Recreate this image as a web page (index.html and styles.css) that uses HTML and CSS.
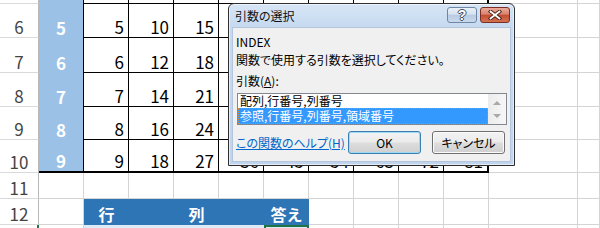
FILE: index.html
```html
<!DOCTYPE html>
<html lang="ja">
<head>
<meta charset="utf-8">
<title>引数の選択</title>
<link rel="stylesheet" href="styles.css">
</head>
<body>
<div class="sheet">
  <!-- row 5 (partially visible) -->
  <div class="rh"></div><div class="a"></div>
  <div class="d"></div><div class="d"></div><div class="d"></div><div class="d"></div><div class="d"></div><div class="d"></div><div class="d"></div><div class="d"></div><div class="d br"></div>
  <div class="g"></div><div class="g"></div>
  <!-- row 6 -->
  <div class="rh">6</div><div class="a">5</div>
  <div class="d">5</div><div class="d">10</div><div class="d">15</div><div class="d">20</div><div class="d">25</div><div class="d">30</div><div class="d">35</div><div class="d">40</div><div class="d br">45</div>
  <div class="g"></div><div class="g"></div>
  <!-- row 7 -->
  <div class="rh">7</div><div class="a">6</div>
  <div class="d">6</div><div class="d">12</div><div class="d">18</div><div class="d">24</div><div class="d">30</div><div class="d">36</div><div class="d">42</div><div class="d">48</div><div class="d br">54</div>
  <div class="g"></div><div class="g"></div>
  <!-- row 8 -->
  <div class="rh">8</div><div class="a">7</div>
  <div class="d">7</div><div class="d">14</div><div class="d">21</div><div class="d">28</div><div class="d">35</div><div class="d">42</div><div class="d">49</div><div class="d">56</div><div class="d br">63</div>
  <div class="g"></div><div class="g"></div>
  <!-- row 9 -->
  <div class="rh">9</div><div class="a">8</div>
  <div class="d">8</div><div class="d">16</div><div class="d">24</div><div class="d">32</div><div class="d">40</div><div class="d">48</div><div class="d">56</div><div class="d">64</div><div class="d br">72</div>
  <div class="g"></div><div class="g"></div>
  <!-- row 10 -->
  <div class="rh">10</div><div class="a bb">9</div>
  <div class="d bb">9</div><div class="d bb">18</div><div class="d bb">27</div><div class="d bb">36</div><div class="d bb">45</div><div class="d bb">54</div><div class="d bb">63</div><div class="d bb">72</div><div class="d bb br">81</div>
  <div class="g"></div><div class="g"></div>
  <!-- row 11 -->
  <div class="rh">11</div><div class="g"></div>
  <div class="g"></div><div class="g"></div><div class="g"></div><div class="g"></div><div class="g"></div><div class="g"></div><div class="g"></div><div class="g"></div><div class="g"></div>
  <div class="g"></div><div class="g"></div>
  <!-- row 12 -->
  <div class="rh">12</div><div class="g"></div>
  <div class="h">行</div><div class="h"></div><div class="h">列</div><div class="h"></div><div class="h">答え</div>
  <div class="g"></div><div class="g"></div><div class="g"></div><div class="g"></div>
  <div class="g"></div><div class="g"></div>
  <!-- row 13 (partially visible) -->
  <div class="rh cur"></div><div class="g"></div>
  <div class="b"></div><div class="b"></div><div class="b"></div><div class="b"></div><div class="b sel"></div>
  <div class="g"></div><div class="g"></div><div class="g"></div><div class="g"></div>
  <div class="g"></div><div class="g"></div>
</div>

<div class="dlg">
  <div class="dlg-title">
    <span class="caption">引数の選択</span>
    <div class="ctrls">
      <span class="tbtn help-btn">?</span>
      <span class="tbtn close-btn">
        <svg width="14" height="10" viewBox="0 0 14 10">
          <path d="M2.5 1.5 L11.5 8.5 M11.5 1.5 L2.5 8.5" stroke="#4a1c14" stroke-width="3.6" stroke-linecap="square" fill="none"/>
          <path d="M2.5 1.5 L11.5 8.5 M11.5 1.5 L2.5 8.5" stroke="#ffffff" stroke-width="1.8" stroke-linecap="square" fill="none"/>
        </svg>
      </span>
    </div>
  </div>
  <div class="dlg-body">
    <div class="line">INDEX</div>
    <div class="line">関数で使用する引数を選択してください。</div>
    <div class="line label">引数(<u>A</u>):</div>
    <div class="listbox">
      <div class="items">
        <div class="item first">配列,行番号,列番号</div>
        <div class="item selected">参照,行番号,列番号,領域番号</div>
      </div>
      <div class="vscroll">
        <span class="arrow up"></span>
        <span class="arrow down"></span>
      </div>
    </div>
    <div class="footer">
      <a class="help-link">この関数のヘルプ(H)</a>
      <button class="btn ok">OK</button>
      <button class="btn cancel">キャンセル</button>
    </div>
  </div>
</div>
</body>
</html>
```

FILE: styles.css
```css
* { box-sizing: border-box; }
html, body { margin: 0; padding: 0; }
body {
  width: 600px;
  height: 228px;
  overflow: hidden;
  position: relative;
  background: #ffffff;
  font-family: "Noto Sans CJK JP", "Noto Sans", sans-serif;
}

/* ---------- spreadsheet ---------- */
.sheet {
  display: grid;
  grid-template-columns: 39px 45px repeat(9, 45px) 89px 1fr;
  grid-template-rows: 4px 34px 35px 34px 33px 33px 26px 26px 1fr;
  height: 228px;
  font-size: 17px;
  line-height: 17px;
}
.sheet > div {
  display: flex;
  align-items: flex-end;
  padding-bottom: 2px;
  white-space: nowrap;
  min-width: 0;
}
.rh {
  justify-content: center;
  color: #444444;
  background: #ffffff;
  border-right: 1px solid #b8b8b8;
  border-bottom: 1px solid #d9d9d9;
}
.rh.cur { border-right: 2px solid #217346; }
.a {
  justify-content: center;
  background: #9bc2e6;
  color: #ffffff;
  font-weight: bold;
  border-right: 1px solid #000000;
}
.d {
  justify-content: flex-end;
  padding-right: 4px;
  color: #000000;
  border-right: 1px solid #000000;
  border-bottom: 1px solid #000000;
}
.bb { border-bottom: 2px solid #000000; }
.br { border-right: 2px solid #000000; }
.g {
  border-right: 1px solid #d4d4d4;
  border-bottom: 1px solid #d4d4d4;
}
.h {
  justify-content: center;
  background: #2e75b6;
  color: #ffffff;
  font-weight: bold;
  font-size: 16px;
}
.b { background: #ddebf7; }
.b.sel {
  border: 2px solid #217346;
  border-bottom: none;
}

/* ---------- dialog ---------- */
.dlg {
  position: absolute;
  left: 228px;
  top: 3px;
  width: 287px;
  height: 163px;
  border: 1px solid #2f2f2f;
  border-radius: 6px 6px 0 0;
  background: linear-gradient(#d7e6f6, #c6daf0 22px, #c0d5ed);
  box-shadow: inset 0 0 0 1px rgba(255, 255, 255, 0.55);
  padding: 0 3px 3px 3px;
  display: flex;
  flex-direction: column;
  font-family: "Noto Sans CJK JP", sans-serif;
  font-size: 12px;
  font-feature-settings: "palt";
  color: #000000;
}
.dlg-title {
  height: 23px;
  display: flex;
  align-items: flex-start;
}
.caption {
  padding-left: 3px;
  line-height: 23px;
  color: #111111;
}
.ctrls {
  margin-left: auto;
  margin-top: 3px;
  margin-right: 1px;
  display: flex;
  gap: 3px;
}
.tbtn {
  width: 30px;
  height: 16px;
  border-radius: 3px;
  display: flex;
  align-items: center;
  justify-content: center;
}
.help-btn {
  border: 1px solid #6f86a4;
  background: linear-gradient(#eaf0f8, #d6e2f0 45%, #b7cbe3 50%, #c9d9ec);
  font-family: "Liberation Sans", sans-serif;
  font-weight: bold;
  font-size: 14px;
  line-height: 14px;
  color: #ffffff;
  text-shadow: 1px 0 #3d4e66, -1px 0 #3d4e66, 0 1px #3d4e66, 0 -1px #3d4e66;
}
.close-btn {
  border: 1px solid #7a2d20;
  background: linear-gradient(#eaab9c, #d7836e 45%, #c34b31 50%, #d27352);
}
.close-btn svg { display: block; }

.dlg-body {
  flex: 1;
  background: #f0f0f0;
  border: 1px solid #b4c6de;
  padding: 5px 5px 0 3px;
  display: flex;
  flex-direction: column;
}
.line {
  height: 18px;
  line-height: 18px;
  white-space: nowrap;
}
.label { margin-top: 3px; }

.listbox {
  margin-top: 3px;
  margin-left: 1px;
  width: 270px;
  height: 32px;
  border: 1px solid #828790;
  background: #ffffff;
  display: flex;
}
.items { flex: 1; }
.item {
  padding-left: 2px;
  white-space: nowrap;
}
.item.first { height: 14px; line-height: 14px; }
.item.selected {
  height: 16px;
  line-height: 16px;
  background: #3399ff;
  color: #ffffff;
  outline: 1px dotted #e08a2c;
  outline-offset: -1px;
}
.vscroll {
  width: 18px;
  background: linear-gradient(90deg, #ececec, #f6f6f6);
  display: flex;
  flex-direction: column;
  align-items: center;
  justify-content: space-around;
  padding: 2px 0;
}
.arrow {
  width: 0;
  height: 0;
  border-left: 4px solid transparent;
  border-right: 4px solid transparent;
}
.arrow.up { border-bottom: 4px solid #a8a8a8; }
.arrow.down { border-top: 4px solid #a8a8a8; }

.footer {
  margin-top: 6px;
  height: 23px;
  display: flex;
  align-items: center;
}
.help-link {
  color: #0066cc;
  text-decoration: underline;
  white-space: nowrap;
}
.btn {
  width: 73px;
  height: 23px;
  padding: 0;
  border-radius: 3px;
  font-family: "Noto Sans CJK JP", sans-serif;
  font-feature-settings: "palt";
  font-size: 12px;
  color: #000000;
  background: linear-gradient(#f3f3f3, #ebebeb 48%, #dddddd 52%, #cfcfcf);
}
.ok {
  margin-left: auto;
  border: 1px solid #3c7fb1;
  box-shadow: inset 0 0 0 1px #9fd7f6;
}
.cancel {
  margin-left: 11px;
  border: 1px solid #707070;
  box-shadow: inset 0 0 0 1px #fbfbfb;
}
```
